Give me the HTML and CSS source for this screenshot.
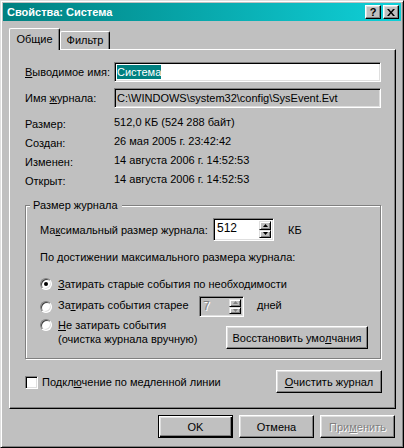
FILE: index.html
```html
<!DOCTYPE html>
<html lang="ru">
<head>
  <meta charset="UTF-8">
  <title>Свойства: Система</title>
  <link rel="stylesheet" href="styles.css">
</head>
<body>
  <div class="window">
    <div class="titlebar">
      <span class="title">Свойства: Система</span>
      <span class="tbtn">?</span>
      <span class="tbtn">
        <svg width="8" height="7" viewBox="0 0 8 7"><path d="M0 0h2l2 2.5L6 0h2L5 3.5 8 7H6L4 4.5 2 7H0l3-3.5z" fill="#000"/></svg>
      </span>
    </div>

    <div class="content">
      <div class="tabs">
        <div class="tab active">Общие</div>
        <div class="tab">Фильтр</div>
      </div>

      <div class="panel">
        <div class="fields">
          <span><u>В</u>ыводимое имя:</span>
          <div class="edit"><span class="sel">Система</span></div>
          <span>Имя <u>ж</u>урнала:</span>
          <div class="edit readonly">C:\WINDOWS\system32\config\SysEvent.Evt</div>
        </div>

        <div class="info">
          <span class="lbl">Размер:</span><span class="val">512,0 КБ (524 288 байт)</span>
          <span class="lbl">Создан:</span><span class="val">26 мая 2005 г. 23:42:42</span>
          <span class="lbl">Изменен:</span><span class="val">14 августа 2006 г. 14:52:53</span>
          <span class="lbl">Открыт:</span><span class="val">14 августа 2006 г. 14:52:53</span>
        </div>

        <fieldset class="group">
          <legend>Размер журнала</legend>
          <div class="maxrow">
            <span class="maxlbl">Ма<u>к</u>симальный размер журнала:</span>
            <div class="spin wide">
              <span class="spin-val">512</span>
              <div class="spin-btns">
                <span class="sbtn"><svg width="5" height="3" viewBox="0 0 5 3"><path d="M2.5 0L5 3H0z" fill="#000"/></svg></span>
                <span class="sbtn"><svg width="5" height="3" viewBox="0 0 5 3"><path d="M0 0h5L2.5 3z" fill="#000"/></svg></span>
              </div>
            </div>
            <span class="unit">КБ</span>
          </div>

          <p class="hint">По достижении максимального размера журнала:</p>

          <div class="radio r1">
            <span class="rb checked"></span>
            <span><u>З</u>атирать старые события по необходимости</span>
          </div>
          <div class="radio r2">
            <span class="rb"></span>
            <span class="r2lbl">За<u>т</u>ирать события старее</span>
            <div class="spin narrow disabled">
              <span class="spin-val">7</span>
              <div class="spin-btns">
                <span class="sbtn"><svg width="5" height="3" viewBox="0 0 5 3"><path d="M2.5 0L5 3H0z" fill="#808080"/></svg></span>
                <span class="sbtn"><svg width="5" height="3" viewBox="0 0 5 3"><path d="M0 0h5L2.5 3z" fill="#808080"/></svg></span>
              </div>
            </div>
            <span class="unit">дней</span>
          </div>
          <div class="radio r3">
            <span class="rb"></span>
            <span class="r3lbl"><u>Н</u>е затирать события<br>(очистка журнала вручную)</span>
            <span class="btn restore">Восстановить умо<u>л</u>чания</span>
          </div>
        </fieldset>

        <div class="bottom-row">
          <span class="cb"></span>
          <span>Подкл<u>ю</u>чение по медленной линии</span>
          <span class="btn clear"><u>О</u>чистить журнал</span>
        </div>
      </div>

      <div class="actions">
        <span class="btn default">OK</span>
        <span class="btn">Отмена</span>
        <span class="btn disabled">При<u>м</u>енить</span>
      </div>
    </div>
  </div>
</body>
</html>
```

FILE: styles.css
```css
* {
  box-sizing: border-box;
}
body {
  margin: 0;
  font-family: 'Liberation Sans', Arial, sans-serif;
  font-size: 11px;
  color: #000;
  background: #c0c0c0;
}
u {
  text-decoration: underline;
  text-underline-offset: 1px;
}
.window {
  width: 404px;
  height: 448px;
  background: #c0c0c0;
  border: 1px solid;
  border-color: #dfdfdf #000 #000 #dfdfdf;
  box-shadow: inset 1px 1px #fff, inset -1px -1px #808080;
  padding: 2px;
  display: flex;
  flex-direction: column;
}
.titlebar {
  height: 18px;
  background: linear-gradient(to right, #008080, #10d0d8);
  display: flex;
  align-items: center;
  padding: 0 2px 0 4px;
}
.title {
  flex: 1;
  color: #fff;
  font-weight: bold;
}
.tbtn {
  width: 16px;
  height: 14px;
  background: #c0c0c0;
  border: 1px solid;
  border-color: #fff #000 #000 #fff;
  box-shadow: inset -1px -1px #808080, inset 1px 1px #dfdfdf;
  display: flex;
  align-items: center;
  justify-content: center;
  font-weight: bold;
  font-size: 11px;
  line-height: 1;
}
.tbtn + .tbtn {
  margin-left: 2px;
}
.content {
  flex: 1;
  padding: 7px 5px 0 6px;
  display: flex;
  flex-direction: column;
}
.tabs {
  display: flex;
  align-items: flex-end;
  height: 22px;
  margin-bottom: -1px;
  position: relative;
  z-index: 1;
}
.tab {
  width: 50px;
  height: 18px;
  margin-bottom: 1px;
  background: #c0c0c0;
  border-top: 1px solid #fff;
  border-left: 1px solid #fff;
  border-right: 1px solid #000;
  box-shadow: inset -1px 0 #808080;
  border-radius: 2px 2px 0 0;
  text-align: center;
  line-height: 13px;
  padding-top: 2px;
}
.tab.active {
  width: 51px;
  height: 22px;
  margin-bottom: 0;
  padding-top: 4px;
}
.panel {
  height: 360px;
  border: 1px solid;
  border-color: #fff #000 #000 #fff;
  box-shadow: inset -1px -1px #808080;
  padding: 12px 14px 0 15px;
}
.fields {
  display: grid;
  grid-template-columns: 89px 1fr;
  grid-auto-rows: 20px;
  row-gap: 6px;
  align-items: center;
}
.edit {
  height: 20px;
  background: #fff;
  border: 1px solid;
  border-color: #808080 #fff #fff #808080;
  box-shadow: inset 1px 1px #000, inset -1px -1px #dfdfdf;
  padding-left: 2px;
  display: flex;
  align-items: center;
  line-height: 14px;
  white-space: nowrap;
}
.edit.readonly {
  background: #c0c0c0;
}
.sel {
  background: #008080;
  color: #fff;
}
.info {
  margin-top: 7px;
  display: grid;
  grid-template-columns: 89px 1fr;
  grid-auto-rows: 19px;
}
.info .lbl {
  line-height: 19px;
}
.info .val {
  line-height: 15px;
}
.group {
  margin: 8px 0 0;
  min-width: 0;
  border: 1px solid #808080;
  box-shadow: 1px 1px 0 #fff, inset 1px 1px 0 #fff;
  padding: 6px 12px 9px 14px;
}
.group legend {
  margin-left: -10px;
  padding: 0 4px 0 3px;
  line-height: 13px;
  background: #c0c0c0;
}
.maxrow {
  display: flex;
  align-items: center;
  height: 23px;
}
.maxlbl {
  width: 173px;
}
.spin {
  display: flex;
  background: #fff;
  border: 1px solid;
  border-color: #808080 #fff #fff #808080;
  box-shadow: inset 1px 1px #000, inset -1px -1px #dfdfdf;
  padding: 2px;
}
.spin.wide {
  width: 61px;
  height: 23px;
}
.spin.narrow {
  width: 45px;
  height: 21px;
}
.spin.disabled {
  background: #c0c0c0;
}
.spin-val {
  flex: 1;
  padding-left: 1px;
  line-height: 14px;
  font-size: 12px;
}
.spin.disabled .spin-val {
  color: #808080;
  text-shadow: 1px 1px #fff;
}
.spin-btns {
  width: 12px;
  display: flex;
  flex-direction: column;
}
.sbtn {
  flex: 1;
  background: #c0c0c0;
  border: 1px solid;
  border-color: #dfdfdf #000 #000 #dfdfdf;
  box-shadow: inset 1px 1px #fff, inset -1px -1px #808080;
  display: flex;
  align-items: center;
  justify-content: center;
}
.unit {
  margin-left: 14px;
}
.hint {
  margin: 10px 0 0;
  line-height: 13px;
}
.radio {
  display: flex;
  align-items: center;
}
.rb {
  width: 12px;
  height: 12px;
  margin-right: 6px;
  flex-shrink: 0;
  border-radius: 50%;
  background: #fff;
  border: 1px solid;
  border-color: #808080 #fff #fff #808080;
  box-shadow: inset 1px 1px #404040, inset -1px -1px #dfdfdf;
  display: flex;
  align-items: center;
  justify-content: center;
}
.rb.checked::after {
  content: '';
  width: 4px;
  height: 4px;
  border-radius: 50%;
  background: #000;
}
.r1 {
  margin-top: 12px;
  height: 16px;
}
.r2 {
  margin-top: 4px;
  height: 21px;
}
.r2lbl {
  width: 141px;
  margin-top: -3px;
}
.r2 .unit {
  margin-left: 13px;
  margin-top: -3px;
}
.r3 {
  margin-top: 1px;
  align-items: flex-start;
}
.r3 .rb {
  margin-top: 1px;
}
.r3lbl {
  line-height: 14px;
}
.btn {
  display: flex;
  align-items: center;
  justify-content: center;
  height: 23px;
  background: #c0c0c0;
  border: 1px solid;
  border-color: #fff #000 #000 #fff;
  box-shadow: inset -1px -1px #808080, inset 1px 1px #dfdfdf;
  white-space: nowrap;
}
.restore {
  width: 142px;
  margin-left: auto;
  margin-top: 8px;
}
.bottom-row {
  margin-top: 11px;
  display: flex;
  align-items: center;
}
.cb {
  width: 13px;
  height: 13px;
  margin: 1px 4px 0 0;
  background: #fff;
  border: 1px solid;
  border-color: #808080 #fff #fff #808080;
  box-shadow: inset 1px 1px #000, inset -1px -1px #dfdfdf;
}
.clear {
  width: 106px;
  margin-left: auto;
  margin-right: -1px;
}
.actions {
  display: flex;
  justify-content: flex-end;
  gap: 6px;
  margin-top: 6px;
  padding-right: 1px;
}
.actions .btn {
  width: 75px;
}
.btn.default {
  border-color: #000;
  box-shadow: inset 1px 1px #fff, inset -1px -1px #000, inset -2px -2px #808080, inset 2px 2px #dfdfdf;
}
.btn.disabled {
  color: #808080;
  text-shadow: 1px 1px #fff;
}
```
